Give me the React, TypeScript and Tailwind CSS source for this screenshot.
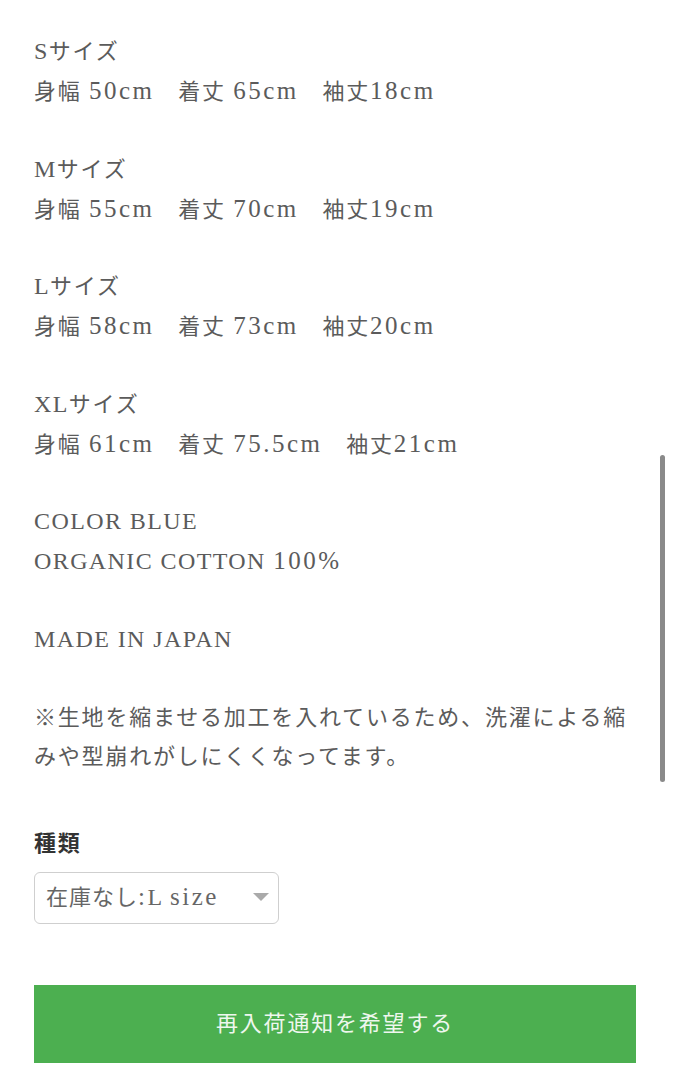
import React from "react";

const font = { fontFamily: '"Liberation Serif", "Noto Sans CJK JP", serif' };

function T({ text }: { text: string }) {
  const re = /([A-Z](?:[A-Z ]*[A-Z])?)|([a-z0-9.%:]+)/g;
  const out: React.ReactNode[] = [];
  let last = 0;
  let m: RegExpExecArray | null;
  let k = 0;
  while ((m = re.exec(text))) {
    if (m.index > last) out.push(<React.Fragment key={k++}>{text.slice(last, m.index)}</React.Fragment>);
    if (m[1]) {
      out.push(
        <span key={k++} className="text-[24px] tracking-[1.4px]">
          {m[1]}
        </span>
      );
    } else {
      out.push(
        <span key={k++} className="text-[25px] tracking-[2.5px]">
          {m[2]}
        </span>
      );
    }
    last = m.index + m[0].length;
  }
  if (last < text.length) out.push(<React.Fragment key={k++}>{text.slice(last)}</React.Fragment>);
  return <>{out}</>;
}

function Block({ lines }: { lines: string[] }) {
  return (
    <div className="mb-[39.2px]">
      {lines.map((l, i) => (
        <div key={i} className="whitespace-pre h-[39.2px]">
          <T text={l} />
        </div>
      ))}
    </div>
  );
}

export default function App() {
  return (
    <div
      className="relative min-h-[1080px] w-[673px] bg-white text-[22px] leading-[39.2px] tracking-[1.8px] text-[#5b5b5b]"
      style={font}
    >
      <div className="absolute left-[660px] top-[455px] h-[327px] w-[5px] rounded-full bg-[#8a8a8a]" />
      <div className="w-[602px] ml-[34px] pt-[32px]">
        <Block lines={["Sサイズ", "身幅 50cm　着丈 65cm　袖丈18cm"]} />
        <Block lines={["Mサイズ", "身幅 55cm　着丈 70cm　袖丈19cm"]} />
        <Block lines={["Lサイズ", "身幅 58cm　着丈 73cm　袖丈20cm"]} />
        <Block lines={["XLサイズ", "身幅 61cm　着丈 75.5cm　袖丈21cm"]} />
        <Block lines={["COLOR BLUE", "ORGANIC COTTON 100%"]} />
        <Block lines={["MADE IN JAPAN"]} />
        <p>※生地を縮ませる加工を入れているため、洗濯による縮みや型崩れがしにくくなってます。</p>

        <div className="mt-[47px] font-bold text-[#333] leading-[40px]">種類</div>
        <div className="mt-[8px] flex h-[52px] w-[245px] items-center justify-between rounded-[6px] border-[1.5px] border-[#cfcfcf] pl-[11px] pr-[9px] text-[#666] whitespace-pre">
          <span className="tracking-[1px]">
            <T text="在庫なし:L size" />
          </span>
          <svg width="16" height="9" viewBox="0 0 16 9">
            <polygon points="0,0 16,0 8,8" fill="#aaaaaa" />
          </svg>
        </div>

        <button className="mt-[61px] flex h-[78px] w-[602px] items-center justify-center bg-[#4caf50] text-[#eef7ee] tracking-[1.8px]">
          再入荷通知を希望する
        </button>
      </div>
    </div>
  );
}
